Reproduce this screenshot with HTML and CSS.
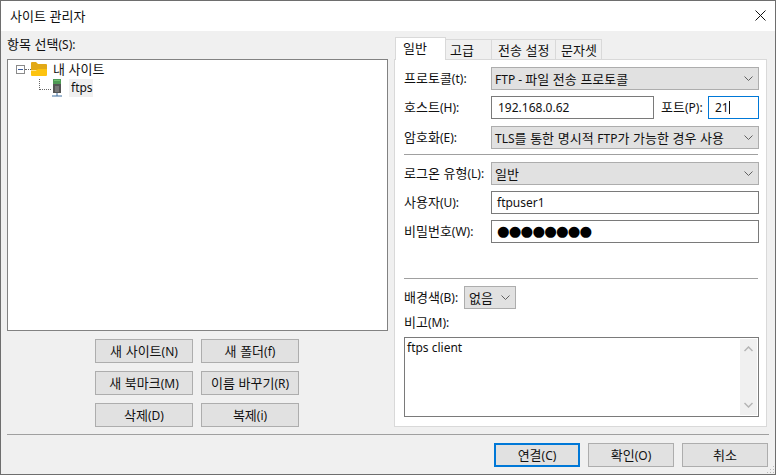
FILE: index.html
```html
<!DOCTYPE html>
<html lang="ko">
<head>
<meta charset="utf-8">
<title>사이트 관리자</title>
<link rel="stylesheet" href="styles.css">
</head>
<body>
<div class="window">
  <header class="titlebar">
    <span class="ko">사이트 관리자</span>
    <svg class="close" width="11" height="11" viewBox="0 0 11 11"><path d="M.5.500l10 10M10.500.500l-10 10" stroke="#111" stroke-width="1" fill="none"/></svg>
  </header>
  <div class="content">
    <div class="columns">
      <section class="left">
        <div class="left-label"><span class="ko">항목 선택</span>(S):</div>
        <div class="tree">
          <div class="tree-root">
            <svg class="expander" width="9" height="9" viewBox="0 0 9 9"><rect x=".5" y=".5" width="8" height="8" fill="#fff" stroke="#8a8a8a"/><path d="M2 4.500h5" stroke="#3a5a9a"/></svg>
            <span class="dots-h"></span>
            <svg class="folder" width="16" height="14" viewBox="0 0 16 14"><path d="M0 1a1 1 0 0 1 1-1h4l2 2h8a1 1 0 0 1 1 1v5H0z" fill="#e2a917"/><path d="M0 13a1 1 0 0 0 1 1h14a1 1 0 0 0 1-1V7H7L5 8.500H0z" fill="#fdc30f"/></svg>
            <span class="tree-text ko">내 사이트</span>
          </div>
          <div class="tree-child">
            <span class="elbow"></span>
            <svg class="server" width="12" height="18" viewBox="0 0 12 18"><rect x="2" y="0" width="8" height="14" fill="#555"/><rect x="2" y="0" width="8" height="5" fill="#4f9a55"/><rect x="3" y="1" width="6" height="1" fill="#6fc06f"/><rect x="4" y="7" width="4" height="6" fill="#777"/><path d="M6 14v3M1 17h10" stroke="#3f6f9f"/></svg>
            <span class="selected">ftps</span>
          </div>
        </div>
        <div class="left-buttons">
          <div class="btn"><span><span class="ko">새 사이트</span>(N)</span></div>
          <div class="btn"><span><span class="ko">새 폴더</span>(f)</span></div>
          <div class="btn"><span><span class="ko">새 북마크</span>(M)</span></div>
          <div class="btn"><span><span class="ko">이름 바꾸기</span>(R)</span></div>
          <div class="btn"><span><span class="ko">삭제</span>(D)</span></div>
          <div class="btn"><span><span class="ko">복제</span>(i)</span></div>
        </div>
      </section>
      <section class="right">
        <div class="tabs">
          <div class="tab active"><span class="ko">일반</span></div>
          <div class="tab t2"><span class="ko">고급</span></div>
          <div class="tab t3"><span class="ko">전송 설정</span></div>
          <div class="tab t4"><span class="ko">문자셋</span></div>
        </div>
        <div class="panel">
          <div class="row">
            <label class="lbl"><span class="ko">프로토콜</span>(t):</label>
            <div class="select grow"><span>FTP - <span class="ko">파일 전송 프로토콜</span></span><svg class="chev" width="9" height="5" viewBox="0 0 9 5"><path d="M.5.500l4 4 4-4" stroke="#606060" fill="none"/></svg></div>
          </div>
          <div class="row">
            <label class="lbl"><span class="ko">호스트</span>(H):</label>
            <div class="input host">192.168.0.62</div>
            <label class="lbl-port"><span class="ko">포트</span>(P):</label>
            <div class="input port">21<span class="caret"></span></div>
          </div>
          <div class="row enc">
            <label class="lbl"><span class="ko">암호화</span>(E):</label>
            <div class="select grow"><span>TLS<span class="ko">를 통한 명시적 </span>FTP<span class="ko">가 가능한 경우 사용</span></span><svg class="chev" width="9" height="5" viewBox="0 0 9 5"><path d="M.5.500l4 4 4-4" stroke="#606060" fill="none"/></svg></div>
          </div>
          <hr class="rule rule-a">
          <div class="row">
            <label class="lbl"><span class="ko">로그온 유형</span>(L):</label>
            <div class="select grow"><span class="ko">일반</span><svg class="chev" width="9" height="5" viewBox="0 0 9 5"><path d="M.5.500l4 4 4-4" stroke="#606060" fill="none"/></svg></div>
          </div>
          <div class="row">
            <label class="lbl"><span class="ko">사용자</span>(U):</label>
            <div class="input grow">ftpuser1</div>
          </div>
          <div class="row">
            <label class="lbl"><span class="ko">비밀번호</span>(W):</label>
            <div class="input grow pw">●●●●●●●●</div>
          </div>
          <hr class="rule rule-b">
          <div class="row color-row">
            <label class="lbl-color"><span class="ko">배경색</span>(B):</label>
            <div class="select color"><span class="ko">없음</span><svg class="chev" width="9" height="5" viewBox="0 0 9 5"><path d="M.5.500l4 4 4-4" stroke="#606060" fill="none"/></svg></div>
          </div>
          <div class="memo-label"><span class="ko">비고</span>(M):</div>
          <div class="memo">
            <div class="memo-text">ftps client</div>
            <div class="scroll">
              <svg width="9" height="6" viewBox="0 0 9 6"><path d="M.5 5L4.500 1l4 4" stroke="#b5b5b5" stroke-width="1.500" fill="none"/></svg>
              <svg width="9" height="6" viewBox="0 0 9 6"><path d="M.5 1l4 4 4-4" stroke="#b5b5b5" stroke-width="1.500" fill="none"/></svg>
            </div>
          </div>
        </div>
      </section>
    </div>
    <hr class="rule footer-rule">
    <footer class="footer">
      <div class="btn wide default"><span><span class="ko">연결</span>(C)</span></div>
      <div class="btn wide"><span><span class="ko">확인</span>(O)</span></div>
      <div class="btn wide"><span class="ko">취소</span></div>
    </footer>
    <svg class="grip" width="10" height="10" viewBox="0 0 10 10"><path d="M8 2h1v1H8zM5 5h1v1H5zM8 5h1v1H8zM2 8h1v1H2zM5 8h1v1H5zM8 8h1v1H8z" fill="#b8b8b8"/></svg>
  </div>
</div>
</body>
</html>
```
FILE: styles.css
```css
* { box-sizing: border-box; }
html, body { margin: 0; padding: 0; }
body {
  width: 776px;
  height: 475px;
  overflow: hidden;
  font-family: "Noto Sans", "Noto Sans CJK KR", sans-serif;
  font-size: 12px;
  color: #111;
}
.ko { font-family: "Noto Sans CJK KR", sans-serif; font-size: 13px; }
.window {
  width: 776px;
  height: 475px;
  border: 1px solid #6e6e6e;
  display: flex;
  flex-direction: column;
  background: #f0f0f0;
}
.titlebar {
  height: 30px;
  flex: none;
  background: #fff;
  display: flex;
  align-items: center;
  justify-content: space-between;
  padding: 0 9px 1px 9px;
}
.content {
  flex: 1;
  position: relative;
  padding: 0 6px;
  display: flex;
  flex-direction: column;
}
.columns { display: flex; gap: 6px; height: 396px; flex: none; }
.left { width: 381px; display: flex; flex-direction: column; }
.left-label { height: 28px; padding-top: 4px; line-height: 18px; }
.tree {
  height: 272px;
  background: #fff;
  border: 1px solid #828282;
  padding: 1px 0 0 8px;
}
.tree-root { display: flex; align-items: center; height: 17px; }
.expander { flex: none; }
.dots-h { width: 6px; border-top: 1px dotted #666; }
.folder { flex: none; margin-top: -1px; }
.tree-text { margin-left: 6px; line-height: 16px; padding-bottom: 1px; }
.tree-child { display: flex; align-items: center; height: 19px; margin-left: 23px; }
.elbow {
  width: 12px;
  height: 11px;
  margin-top: -6px;
  border-left: 1px dotted #666;
  border-bottom: 1px dotted #666;
  flex: none;
}
.server { flex: none; }
.selected { background: #f0f0f0; padding: 0 2px; margin-left: 6px; width: 24px; height: 18px; line-height: 17px; }
.left-buttons {
  display: grid;
  grid-template-columns: 98px 98px;
  grid-auto-rows: 24px;
  gap: 8px;
  justify-content: start;
  margin: 8px 0 0 88px;
}
.btn {
  background: #e1e1e1;
  border: 1px solid #adadad;
  display: flex;
  align-items: center;
  justify-content: center;
  line-height: 18px;
}
.right { width: 373px; display: flex; flex-direction: column; }
.tabs {
  display: flex;
  height: 28px;
  flex: none;
  align-items: flex-end;
  padding-left: 1px;
  position: relative;
  z-index: 1;
}
.tab {
  background: #f0f0f0;
  border: 1px solid #d9d9d9;
  border-bottom: 0;
  height: 20px;
  line-height: 19px;
  margin-right: -1px;
  white-space: nowrap;
}
.tab.active {
  width: 51px;
  height: 23px;
  background: #fff;
  margin-bottom: -1px;
  line-height: 20px;
  padding-left: 7px;
}
.t2 { width: 47px; padding-left: 4px; }
.t3 { width: 65px; padding-left: 6px; }
.t4 { width: 47px; padding-left: 5px; }
.panel {
  flex: 1;
  background: #fff;
  border: 1px solid #d9d9d9;
  padding: 7px 7px 9px 9px;
  display: flex;
  flex-direction: column;
}
.row { display: flex; align-items: center; height: 23px; margin-bottom: 6px; flex: none; }
.enc { margin-top: 1px; }
.lbl { width: 87px; flex: none; white-space: nowrap; padding-bottom: 2px; }
.grow { flex: 1; }
.select {
  height: 23px;
  background: #e1e1e1;
  border: 1px solid #adadad;
  display: flex;
  align-items: center;
  justify-content: space-between;
  padding: 0 5px 0 3px;
}
.input {
  height: 23px;
  background: #fff;
  border: 1px solid #7a7a7a;
  display: flex;
  align-items: center;
  padding-left: 5px;
}
.host { width: 163px; padding-left: 6px; flex: none; }
.lbl-port { width: 54px; flex: none; padding: 0 0 2px 7px; white-space: nowrap; }
.port { width: 51px; flex: none; border-color: #0078d7; padding-left: 6px; }
.caret { width: 1px; height: 13px; background: #111; margin-left: 0; }
.pw { font-size: 14.5px; letter-spacing: -0.85px; padding-bottom: 1px; font-family: "DejaVu Sans", sans-serif; color: #000; }
.rule { border: 0; height: 1px; background: #a0a0a0; margin: 0; flex: none; }
.rule-a { margin: -1px 1px 7px 0; }
.rule-b { margin: 29px 1px 7px 0; }
.color-row { margin-bottom: 0; }
.lbl-color { width: 60px; flex: none; white-space: nowrap; padding-bottom: 2px; }
.color { width: 52px; padding: 0 5px 0 4px; }
.memo-label { height: 28px; padding-top: 4px; line-height: 18px; flex: none; }
.memo {
  height: 80px;
  flex: none;
  background: #fff;
  border: 1px solid #7a7a7a;
  display: flex;
  justify-content: space-between;
  padding: 1px 1px 1px 2px;
}
.memo-text { line-height: 18px; }
.scroll {
  width: 17px;
  background: #f0f0f0;
  display: flex;
  flex-direction: column;
  justify-content: space-between;
  align-items: center;
  padding: 7px 0;
}
.footer-rule { margin-top: 7px; margin-right: 0; }
.footer { display: flex; justify-content: flex-end; gap: 8px; margin-top: 8px; padding-right: 1px; }
.wide { width: 86px; height: 24px; }
.default { border: 2px solid #0078d7; }
.grip { position: absolute; right: 0; bottom: 0; }
```
